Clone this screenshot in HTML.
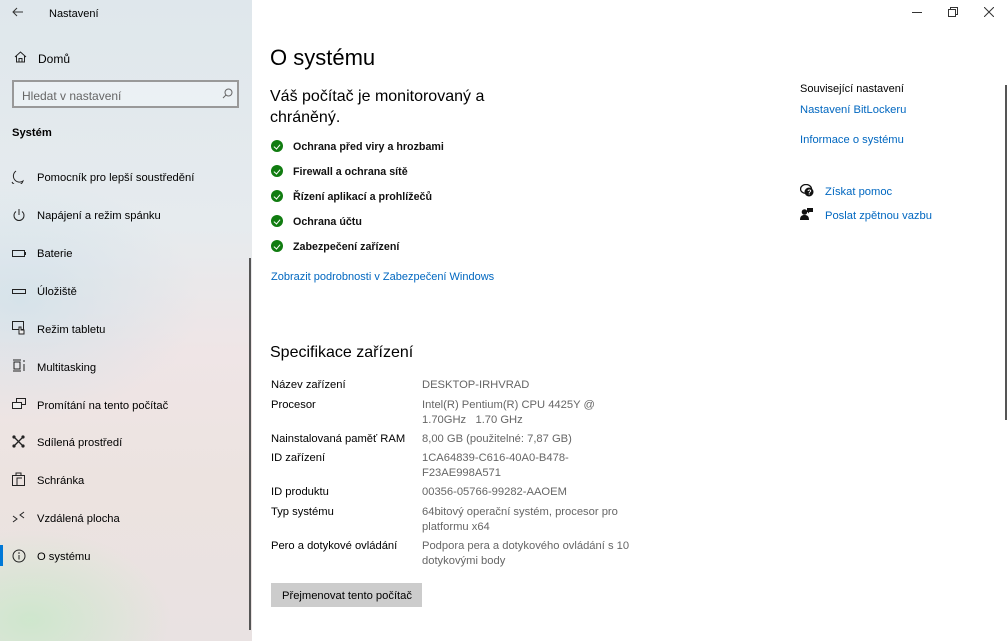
<!DOCTYPE html>
<html><head><meta charset="utf-8"><style>
*{margin:0;padding:0;box-sizing:border-box}
body{width:1008px;height:641px;overflow:hidden;font-family:"Liberation Sans",sans-serif;color:#000;background:#fff;position:relative;font-size:11.2px}
.side{position:absolute;left:0;top:0;width:252px;height:641px;background:
radial-gradient(ellipse 140px 90px at 30px 620px,rgba(200,232,200,.8),transparent),
radial-gradient(ellipse 180px 120px at 20px 300px,rgba(205,225,235,.7),transparent),
linear-gradient(180deg,#dfe7ec 0%,#e6ebee 35%,#efe5e6 55%,#ece3e0 75%,#e9e2e2 100%)}
.a{position:absolute;white-space:nowrap;line-height:1}
.t{margin-top:2px}
.lnk{color:#0067c0}
.sp{position:absolute;left:271px;font-size:11.2px;line-height:15px;margin-top:1px}
.v{position:absolute;left:422px;color:#666;font-size:11.2px;line-height:15px;margin-top:1px}
.chk{position:absolute;left:271px;width:12px;height:12px;border-radius:50%;background:#107c10;margin-top:1px}
.chk:after{content:"";position:absolute;left:3.5px;top:2.5px;width:3px;height:5px;border:solid #fff;border-width:0 1.5px 1.5px 0;transform:rotate(40deg)}
.ct{position:absolute;left:293px;font-weight:bold;font-size:10.7px;color:#111;margin-top:1px}
</style></head><body>
<div class="side">
<svg class="a" style="left:12px;top:7px" width="12" height="10"><path d="M11 5H1M5 1L1 5l4 4" stroke="#333" fill="none"/></svg>
<div class="a t" style="left:49px;top:7px;font-size:11px">Nastavení</div>
<svg class="a" style="left:14px;top:51px" width="13" height="12"><path d="M1 6L6.5 1 12 6M2.5 5v6h8V5M5 11V7.5h3V11" stroke="#222" fill="none"/></svg>
<div class="a t" style="left:38px;top:51px;font-size:12px">Domů</div>
<div class="a" style="left:12px;top:80px;width:227px;height:28px;border:2px solid #999;background:rgba(240,244,246,.7)"></div>
<div class="a t" style="left:22px;top:88px;color:#666;font-size:12px">Hledat v nastavení</div>
<svg class="a" style="left:222px;top:88px" width="11" height="11"><circle cx="6.5" cy="4.5" r="3.5" stroke="#666" fill="none"/><path d="M4 7L1 10" stroke="#666"/></svg>
<div class="a t" style="left:12px;top:126px;font-weight:bold;font-size:11.2px">Systém</div>

<svg class="a" style="left:11px;top:170px" width="14" height="14"><path d="M5 1A6 6 0 0 0 12 11 6 6 0 0 1 1 12" stroke="#222" fill="none"/></svg>
<div class="a t" style="left:37px;top:171px">Pomocník pro lepší soustředění</div>
<svg class="a" style="left:12px;top:208px" width="14" height="14"><path d="M4 3.5A5 5 0 1 0 10 3.5M7 1v6" stroke="#222" fill="none"/></svg>
<div class="a t" style="left:37px;top:209px">Napájení a režim spánku</div>
<svg class="a" style="left:12px;top:250px" width="14" height="8"><rect x=".5" y=".5" width="12" height="6" stroke="#222" fill="none"/><rect x="12.5" y="2" width="1.5" height="3" fill="#222"/></svg>
<div class="a t" style="left:37px;top:247px">Baterie</div>
<svg class="a" style="left:12px;top:289px" width="14" height="6"><rect x=".5" y=".5" width="13" height="4" stroke="#222" fill="none"/></svg>
<div class="a t" style="left:37px;top:285px">Úložiště</div>
<svg class="a" style="left:12px;top:321px" width="14" height="14"><rect x=".5" y=".5" width="11" height="8" stroke="#222" fill="none"/><path d="M7 13V6h2v3h3v4z" stroke="#222" fill="#eee"/></svg>
<div class="a t" style="left:37px;top:323px">Režim tabletu</div>
<svg class="a" style="left:12px;top:359px" width="14" height="14"><path d="M1 1h8M1 12h8M2 3h6v7H2zM12 1v2M12 5v7" stroke="#222" fill="none"/></svg>
<div class="a t" style="left:37px;top:361px">Multitasking</div>
<svg class="a" style="left:12px;top:398px" width="14" height="12"><rect x="4.5" y=".5" width="9" height="6" stroke="#222" fill="none"/><rect x=".5" y="4.5" width="9" height="6" stroke="#222" fill="#eee"/></svg>
<div class="a t" style="left:37px;top:399px">Promítání na tento počítač</div>
<svg class="a" style="left:12px;top:435px" width="13" height="13"><path d="M2 2l9 9M11 2l-9 9" stroke="#222" stroke-width="1.3"/><circle cx="2" cy="2" r="1.6" fill="#222"/><circle cx="11" cy="2" r="1.6" fill="#222"/><circle cx="2" cy="11" r="1.6" fill="#222"/><circle cx="11" cy="11" r="1.6" fill="#222"/></svg>
<div class="a t" style="left:37px;top:436px">Sdílená prostředí</div>
<svg class="a" style="left:12px;top:472px" width="13" height="14"><path d="M.5 3.5h12v10H.5zM4 3.5V1h5v2.5M5 13.5V6h5" stroke="#222" fill="none"/></svg>
<div class="a t" style="left:37px;top:474px">Schránka</div>
<svg class="a" style="left:12px;top:511px" width="13" height="13"><path d="M1 5l4 3-4 3M12 1L8 4l4 3" stroke="#222" fill="none"/></svg>
<div class="a t" style="left:37px;top:512px">Vzdálená plocha</div>
<div class="a" style="left:0;top:545px;width:3px;height:21px;background:#0078d7"></div>
<svg class="a" style="left:12px;top:549px" width="14" height="14"><circle cx="7" cy="7" r="6" stroke="#222" fill="none"/><path d="M7 6v4.5" stroke="#222"/><circle cx="7" cy="4" r=".8" fill="#222"/></svg>
<div class="a t" style="left:37px;top:550px">O systému</div>
<div class="a" style="left:249px;top:258px;width:2px;height:372px;background:#555"></div>
</div>

<div class="a" style="left:912px;top:12px;width:10px;height:1px;background:#333"></div>
<svg class="a" style="left:948px;top:7px" width="10" height="10"><rect x=".5" y="2.5" width="7" height="7" stroke="#333" fill="#fff"/><path d="M2.5 2.5V.5h7v7h-2" stroke="#333" fill="none"/></svg>
<svg class="a" style="left:984px;top:7px" width="10" height="10"><path d="M0 0l10 10M10 0L0 10" stroke="#333"/></svg>

<div class="a t" style="left:270px;top:45px;font-size:22px">O systému</div>
<div class="a t" style="left:270px;top:84px;font-size:16px;line-height:21px">Váš počítač je monitorovaný a<br>chráněný.</div>
<div class="chk" style="top:139px"></div><div class="ct" style="top:140px">Ochrana před viry a hrozbami</div>
<div class="chk" style="top:164px"></div><div class="ct" style="top:165px">Firewall a ochrana sítě</div>
<div class="chk" style="top:189px"></div><div class="ct" style="top:190px">Řízení aplikací a prohlížečů</div>
<div class="chk" style="top:214px"></div><div class="ct" style="top:215px">Ochrana účtu</div>
<div class="chk" style="top:239px"></div><div class="ct" style="top:240px">Zabezpečení zařízení</div>
<div class="a lnk t" style="left:271px;top:270px;font-size:11px">Zobrazit podrobnosti v Zabezpečení Windows</div>

<div class="a t" style="left:270px;top:343px;font-size:16px">Specifikace zařízení</div>
<div class="sp" style="top:377px">Název zařízení</div><div class="v" style="top:377px">DESKTOP-IRHVRAD</div>
<div class="sp" style="top:397px">Procesor</div><div class="v" style="top:397px">Intel(R) Pentium(R) CPU 4425Y @<br>1.70GHz&nbsp;&nbsp;&nbsp;1.70 GHz</div>
<div class="sp" style="top:431px">Nainstalovaná paměť RAM</div><div class="v" style="top:431px">8,00 GB (použitelné: 7,87 GB)</div>
<div class="sp" style="top:450px">ID zařízení</div><div class="v" style="top:450px">1CA64839-C616-40A0-B478-<br>F23AE998A571</div>
<div class="sp" style="top:484px">ID produktu</div><div class="v" style="top:484px">00356-05766-99282-AAOEM</div>
<div class="sp" style="top:504px">Typ systému</div><div class="v" style="top:504px">64bitový operační systém, procesor pro<br>platformu x64</div>
<div class="sp" style="top:538px">Pero a dotykové ovládání</div><div class="v" style="top:538px">Podpora pera a dotykového ovládání s 10<br>dotykovými body</div>
<div class="a" style="left:271px;top:583px;width:151px;height:24px;background:#ccc"></div>
<div class="a t" style="left:282px;top:589px">Přejmenovat tento počítač</div>

<div class="a t" style="left:800px;top:82px;font-size:11px">Související nastavení</div>
<div class="a lnk t" style="left:800px;top:103px">Nastavení BitLockeru</div>
<div class="a lnk t" style="left:800px;top:133px">Informace o systému</div>
<svg class="a" style="left:800px;top:184px" width="14" height="13"><ellipse cx="6" cy="5" rx="5.5" ry="4.5" fill="#fff" stroke="#111" stroke-width="1.3"/><circle cx="9" cy="8" r="4.5" fill="#111"/><text x="7.2" y="10.5" font-size="7" fill="#fff" font-family="Liberation Sans" font-weight="bold">?</text></svg>
<div class="a lnk t" style="left:825px;top:185px">Získat pomoc</div>
<svg class="a" style="left:800px;top:207px" width="13" height="14"><circle cx="4.5" cy="5" r="2.8" fill="#111"/><path d="M0 13c0-4 2-5 4.5-5S9 9 9 13z" fill="#111"/><path d="M7 1h6v4H9.5L8 6.5V5H7z" fill="#111"/></svg>
<div class="a lnk t" style="left:825px;top:209px">Poslat zpětnou vazbu</div>
<div class="a" style="left:1005px;top:85px;width:2px;height:335px;background:#555"></div>
</body></html>
